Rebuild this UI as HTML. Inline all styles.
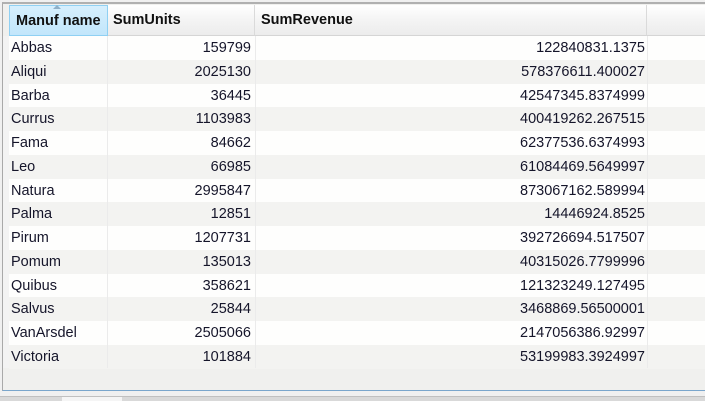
<!DOCTYPE html>
<html><head><style>
html,body{margin:0;padding:0;width:705px;height:400px;overflow:hidden;background:#f0f0f0;font-family:"Liberation Sans",sans-serif;}
.frame{position:absolute;left:2px;top:2px;width:703px;height:389px;border-top:2px solid #b0b0b0;border-left:1px solid #a9a9a9;border-bottom:1px solid #7aa6cc;box-sizing:border-box;background:#f0f0ee;}
.hdr{position:absolute;top:5px;height:31px;box-sizing:border-box;background:linear-gradient(#ffffff,#f4f4f4 50%,#ececec);border-right:1px solid #dadada;border-bottom:1px solid #d5d5d5;font-size:14.5px;font-weight:bold;color:#111;line-height:31px;padding-left:6px;}
.sel{background:linear-gradient(#d6effd,#c2e6fb);border:1px solid #8fd0f3;}
.rows{position:absolute;left:9px;top:36px;width:696px;}
.r{height:23.77px;position:relative;font-size:14.5px;color:#15152a;line-height:25px;}
.r:nth-child(odd){background:#fefefd;}
.r:nth-child(even){background:#f3f3f1;}
.r span{position:absolute;top:0;}
.a{left:2px;}
.b{right:454px;}
.c{right:60px;}
.rh{position:absolute;left:3px;top:36px;width:6px;height:332px;background:#f3f3f3;border-right:1px solid #e4e4e4;}
.colsep{position:absolute;top:36px;height:332px;width:1px;background:#ebebeb;}
.tabs{position:absolute;top:396px;left:0;width:705px;height:4px;background:#d9d9d9;border-top:1px solid #c0c0c0;}
</style></head><body>
<div class="frame"></div>
<div class="rh"></div>
<div class="hdr" style="left:255px;width:392px;">SumRevenue</div>
<div class="hdr" style="left:647px;width:58px;border-right:none"></div>
<div class="hdr" style="left:107px;width:148px;">SumUnits</div>
<div class="hdr sel" style="left:9px;width:99px;">Manuf name<div style="position:absolute;left:43px;top:-1px;width:0;height:0;border-left:4px solid transparent;border-right:4px solid transparent;border-bottom:4px solid #8fb0c8;"></div></div>
<div class="rows">
<div class="r"><span class="a">Abbas</span><span class="b">159799</span><span class="c">122840831.1375</span></div>
<div class="r"><span class="a">Aliqui</span><span class="b">2025130</span><span class="c">578376611.400027</span></div>
<div class="r"><span class="a">Barba</span><span class="b">36445</span><span class="c">42547345.8374999</span></div>
<div class="r"><span class="a">Currus</span><span class="b">1103983</span><span class="c">400419262.267515</span></div>
<div class="r"><span class="a">Fama</span><span class="b">84662</span><span class="c">62377536.6374993</span></div>
<div class="r"><span class="a">Leo</span><span class="b">66985</span><span class="c">61084469.5649997</span></div>
<div class="r"><span class="a">Natura</span><span class="b">2995847</span><span class="c">873067162.589994</span></div>
<div class="r"><span class="a">Palma</span><span class="b">12851</span><span class="c">14446924.8525</span></div>
<div class="r"><span class="a">Pirum</span><span class="b">1207731</span><span class="c">392726694.517507</span></div>
<div class="r"><span class="a">Pomum</span><span class="b">135013</span><span class="c">40315026.7799996</span></div>
<div class="r"><span class="a">Quibus</span><span class="b">358621</span><span class="c">121323249.127495</span></div>
<div class="r"><span class="a">Salvus</span><span class="b">25844</span><span class="c">3468869.56500001</span></div>
<div class="r"><span class="a">VanArsdel</span><span class="b">2505066</span><span class="c">2147056386.92997</span></div>
<div class="r"><span class="a">Victoria</span><span class="b">101884</span><span class="c">53199983.3924997</span></div>
</div>
<div class="colsep" style="left:107px"></div>
<div class="colsep" style="left:255px"></div>
<div class="colsep" style="left:647px"></div>
<div class="tabs"><div style="position:absolute;left:62px;top:0;width:60px;height:4px;background:#f5f5f5"></div></div>
</body></html>
